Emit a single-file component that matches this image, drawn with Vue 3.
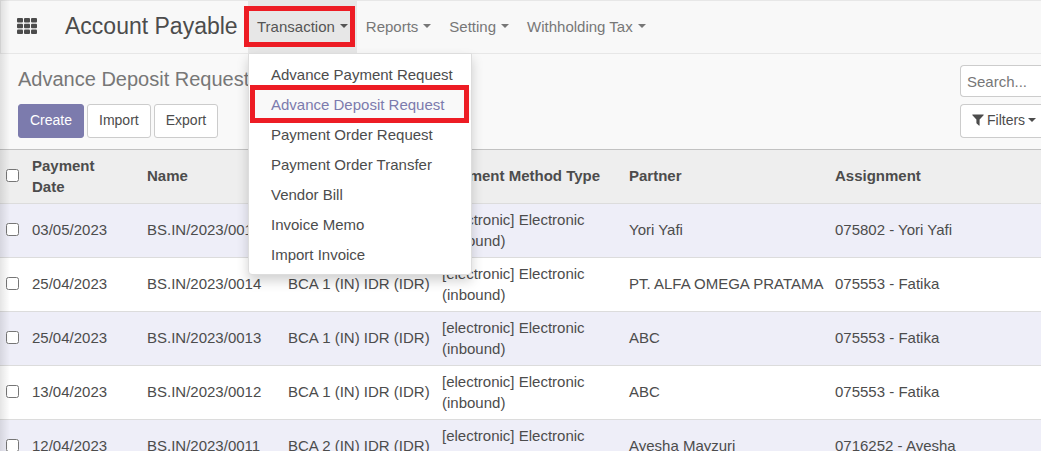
<script setup>
import { ref } from 'vue'

const menus = ['Transaction', 'Reports', 'Setting', 'Withholding Tax']
const entries = [
  'Advance Payment Request',
  'Advance Deposit Request',
  'Payment Order Request',
  'Payment Order Transfer',
  'Vendor Bill',
  'Invoice Memo',
  'Import Invoice',
]
const openMenu = ref('Transaction')
const current = 'Advance Deposit Request'
const method = '[electronic] Electronic (inbound)'
const rows = [
  { date: '03/05/2023', name: 'BS.IN/2023/0015', journal: 'BCA 1 (IN) IDR (IDR)', partner: 'Yori Yafi', assignment: '075802 - Yori Yafi' },
  { date: '25/04/2023', name: 'BS.IN/2023/0014', journal: 'BCA 1 (IN) IDR (IDR)', partner: 'PT. ALFA OMEGA PRATAMA', assignment: '075553 - Fatika' },
  { date: '25/04/2023', name: 'BS.IN/2023/0013', journal: 'BCA 1 (IN) IDR (IDR)', partner: 'ABC', assignment: '075553 - Fatika' },
  { date: '13/04/2023', name: 'BS.IN/2023/0012', journal: 'BCA 1 (IN) IDR (IDR)', partner: 'ABC', assignment: '075553 - Fatika' },
  { date: '12/04/2023', name: 'BS.IN/2023/0011', journal: 'BCA 2 (IN) IDR (IDR)', partner: 'Ayesha Mayzuri', assignment: '0716252 - Ayesha' },
]
function toggle(menu) {
  openMenu.value = openMenu.value === menu ? '' : menu
}
</script>

<template>
  <div class="app">
    <header class="navbar">
      <button class="apps" type="button" aria-label="Applications">
        <svg width="20" height="16" viewBox="0 0 20 16" aria-hidden="true">
          <template v-for="r in 3" :key="r">
            <rect v-for="c in 3" :key="c" :x="(c - 1) * 7" :y="(r - 1) * 5.7" width="6" height="4.6" rx="1" fill="#4c4c4c" />
          </template>
        </svg>
      </button>
      <a class="brand" href="#">Account Payable</a>
      <nav class="menus">
        <div v-for="menu in menus" :key="menu" class="menu" :class="{ open: menu === openMenu }">
          <button class="menu-toggle" type="button" :aria-expanded="menu === openMenu" @click="toggle(menu)">
            {{ menu }}<span class="caret"></span>
          </button>
          <span v-if="menu === 'Transaction'" class="mark mark-menu"></span>
          <ul v-if="menu === 'Transaction' && openMenu === menu" class="dropdown">
            <li v-for="entry in entries" :key="entry">
              <a href="#" :class="{ active: entry === current }">{{ entry }}</a>
              <span v-if="entry === current" class="mark mark-entry"></span>
            </li>
          </ul>
        </div>
      </nav>
    </header>

    <section class="panel">
      <div class="panel-main">
        <h1>Advance Deposit Request</h1>
        <div class="buttons">
          <button class="btn primary" type="button">Create</button>
          <button class="btn" type="button">Import</button>
          <button class="btn" type="button">Export</button>
        </div>
      </div>
      <div class="panel-search">
        <input type="text" placeholder="Search..." aria-label="Search" />
        <button class="btn filters" type="button">
          <svg width="12" height="12" viewBox="0 0 12 12" aria-hidden="true">
            <path d="M0.6 0.5H11.4Q12 0.8 11.6 1.3L7.6 5.4V11.2Q7.5 11.9 6.9 11.5L4.7 9.5Q4.4 9.2 4.4 8.8V5.4L0.4 1.3Q0 0.8 0.6 0.5Z" fill="#4c4c4c" />
          </svg>
          Filters<span class="caret"></span>
        </button>
      </div>
    </section>

    <table>
      <colgroup>
        <col class="c-check" /><col class="c-date" /><col class="c-name" /><col class="c-journal" />
        <col class="c-method" /><col class="c-partner" /><col />
      </colgroup>
      <thead>
        <tr>
          <th class="check"><input type="checkbox" aria-label="Select all" /></th>
          <th>Payment Date</th>
          <th>Name</th>
          <th>Journal</th>
          <th>Payment Method Type</th>
          <th>Partner</th>
          <th>Assignment</th>
        </tr>
      </thead>
      <tbody>
        <tr v-for="row in rows" :key="row.name">
          <td class="check"><input type="checkbox" :aria-label="'Select ' + row.name" /></td>
          <td>{{ row.date }}</td>
          <td>{{ row.name }}</td>
          <td>{{ row.journal }}</td>
          <td>{{ method }}</td>
          <td>{{ row.partner }}</td>
          <td>{{ row.assignment }}</td>
        </tr>
      </tbody>
    </table>
  </div>
</template>

<style>
body {
  margin: 0;
  overflow: hidden;
}
</style>

<style scoped>
.app {
  position: relative;
  height: 100vh;
  overflow: hidden;
  background: #fff;
  color: #4c4c4c;
  font-family: "Liberation Sans", Arial, sans-serif;
  font-size: 15px;
  line-height: 21px;
}
.app::after {
  content: "";
  position: absolute;
  inset: 0 auto 0 0;
  width: 10px;
  background: linear-gradient(to right, rgba(0, 0, 0, 0.1), rgba(0, 0, 0, 0));
  pointer-events: none;
}
button,
input {
  font: inherit;
  color: inherit;
  box-sizing: border-box;
}
a {
  color: inherit;
  text-decoration: none;
}
.navbar {
  display: flex;
  align-items: stretch;
  height: 54px;
  box-sizing: border-box;
  border: 1px solid #e7e7e7;
  border-right: 0;
  background: #f8f8f8;
}
.apps {
  display: flex;
  align-items: center;
  padding: 0 16px 2px;
  border: 0;
  background: none;
}
.brand {
  display: flex;
  align-items: center;
  width: 183px;
  margin-left: 12px;
  padding-bottom: 2px;
  box-sizing: border-box;
  font-size: 23px;
  white-space: nowrap;
}
.menus {
  display: flex;
  color: #777;
}
.menu {
  position: relative;
  display: flex;
}
.menu-toggle {
  display: flex;
  align-items: center;
  gap: 5px;
  padding: 0 9px 2px;
  border: 0;
  background: none;
  white-space: nowrap;
}
.open .menu-toggle {
  background: #e7e7e7;
  color: #555;
}
.caret {
  flex: none;
  border: 4px solid transparent;
  border-top-color: currentColor;
  border-bottom: 0;
}
.mark {
  position: absolute;
  border: 5px solid #ed1c24;
  pointer-events: none;
}
.mark-menu {
  inset: 5px 2px 6px -4px;
}
.mark-entry {
  inset: -5px 2px -3px 1px;
}
.dropdown {
  position: absolute;
  top: 100%;
  left: 0;
  z-index: 2;
  width: 224px;
  margin: 0;
  padding: 6px 0 4px;
  box-sizing: border-box;
  list-style: none;
  border: 1px solid #ddd;
  border-radius: 0 0 4px 4px;
  background: #fff;
  box-shadow: 0 6px 12px rgba(0, 0, 0, 0.18);
  color: #4c4c4c;
}
.dropdown li {
  position: relative;
}
.dropdown a {
  display: block;
  padding: 0 22px;
  line-height: 30px;
  white-space: nowrap;
}
.dropdown a.active {
  background: #f9f9f9;
  color: #7c7bad;
}
.panel {
  display: flex;
  justify-content: space-between;
  height: 96px;
  box-sizing: border-box;
  border-bottom: 1px solid #c2c2c2;
  background: #f9f9f9;
}
.panel-main {
  display: flex;
  flex-direction: column;
  gap: 11px;
  padding: 11px 0 0 18px;
}
h1 {
  margin: 0;
  font-size: 20px;
  font-weight: 400;
  line-height: 28px;
  color: #777;
  white-space: nowrap;
}
.buttons {
  display: flex;
  gap: 3px;
}
.btn {
  height: 34px;
  padding: 0 11px 2px;
  border: 1px solid #ccc;
  border-radius: 3px;
  background: #fff;
  font-size: 14px;
  white-space: nowrap;
}
.btn.primary {
  border-color: #7c7bad;
  background: #7c7bad;
  color: #fff;
}
.panel-search {
  display: flex;
  flex-direction: column;
  gap: 7px;
  width: 81px;
  padding-top: 11px;
}
.panel-search input {
  width: 100%;
  height: 32px;
  padding: 0 6px;
  border: 1px solid #ccc;
  border-right: 0;
  border-radius: 4px 0 0 4px;
  background: #fff;
}
.panel-search input::placeholder {
  color: #777;
}
.btn.filters {
  display: flex;
  align-items: center;
  gap: 3px;
  padding: 0 0 2px 11px;
  border-right: 0;
  border-radius: 4px 0 0 4px;
}
.filters svg {
  flex: none;
}
table {
  width: 100%;
  table-layout: fixed;
  border-collapse: separate;
  border-spacing: 0;
}
.c-check {
  width: 24px;
}
.c-date {
  width: 115px;
}
.c-name {
  width: 141px;
}
.c-journal {
  width: 154px;
}
.c-method {
  width: 187px;
}
.c-partner {
  width: 206px;
}
th,
td {
  height: 54px;
  padding: 4px 0 6px 8px;
  box-sizing: border-box;
  border-bottom: 1px solid #dcdcdc;
  text-align: left;
  vertical-align: middle;
}
th {
  padding-right: 32px;
  background: #eee;
}
th:nth-child(5) {
  padding-right: 0;
}
td:nth-child(5) {
  padding-right: 24px;
}
td:nth-child(n + 6) {
  white-space: nowrap;
}
tbody tr:nth-child(odd) {
  background: #eeeef8;
}
th.check,
td.check {
  padding: 0 0 2px 6px;
}
.check input {
  display: block;
  width: 13px;
  height: 13px;
  margin: 0;
}
</style>
